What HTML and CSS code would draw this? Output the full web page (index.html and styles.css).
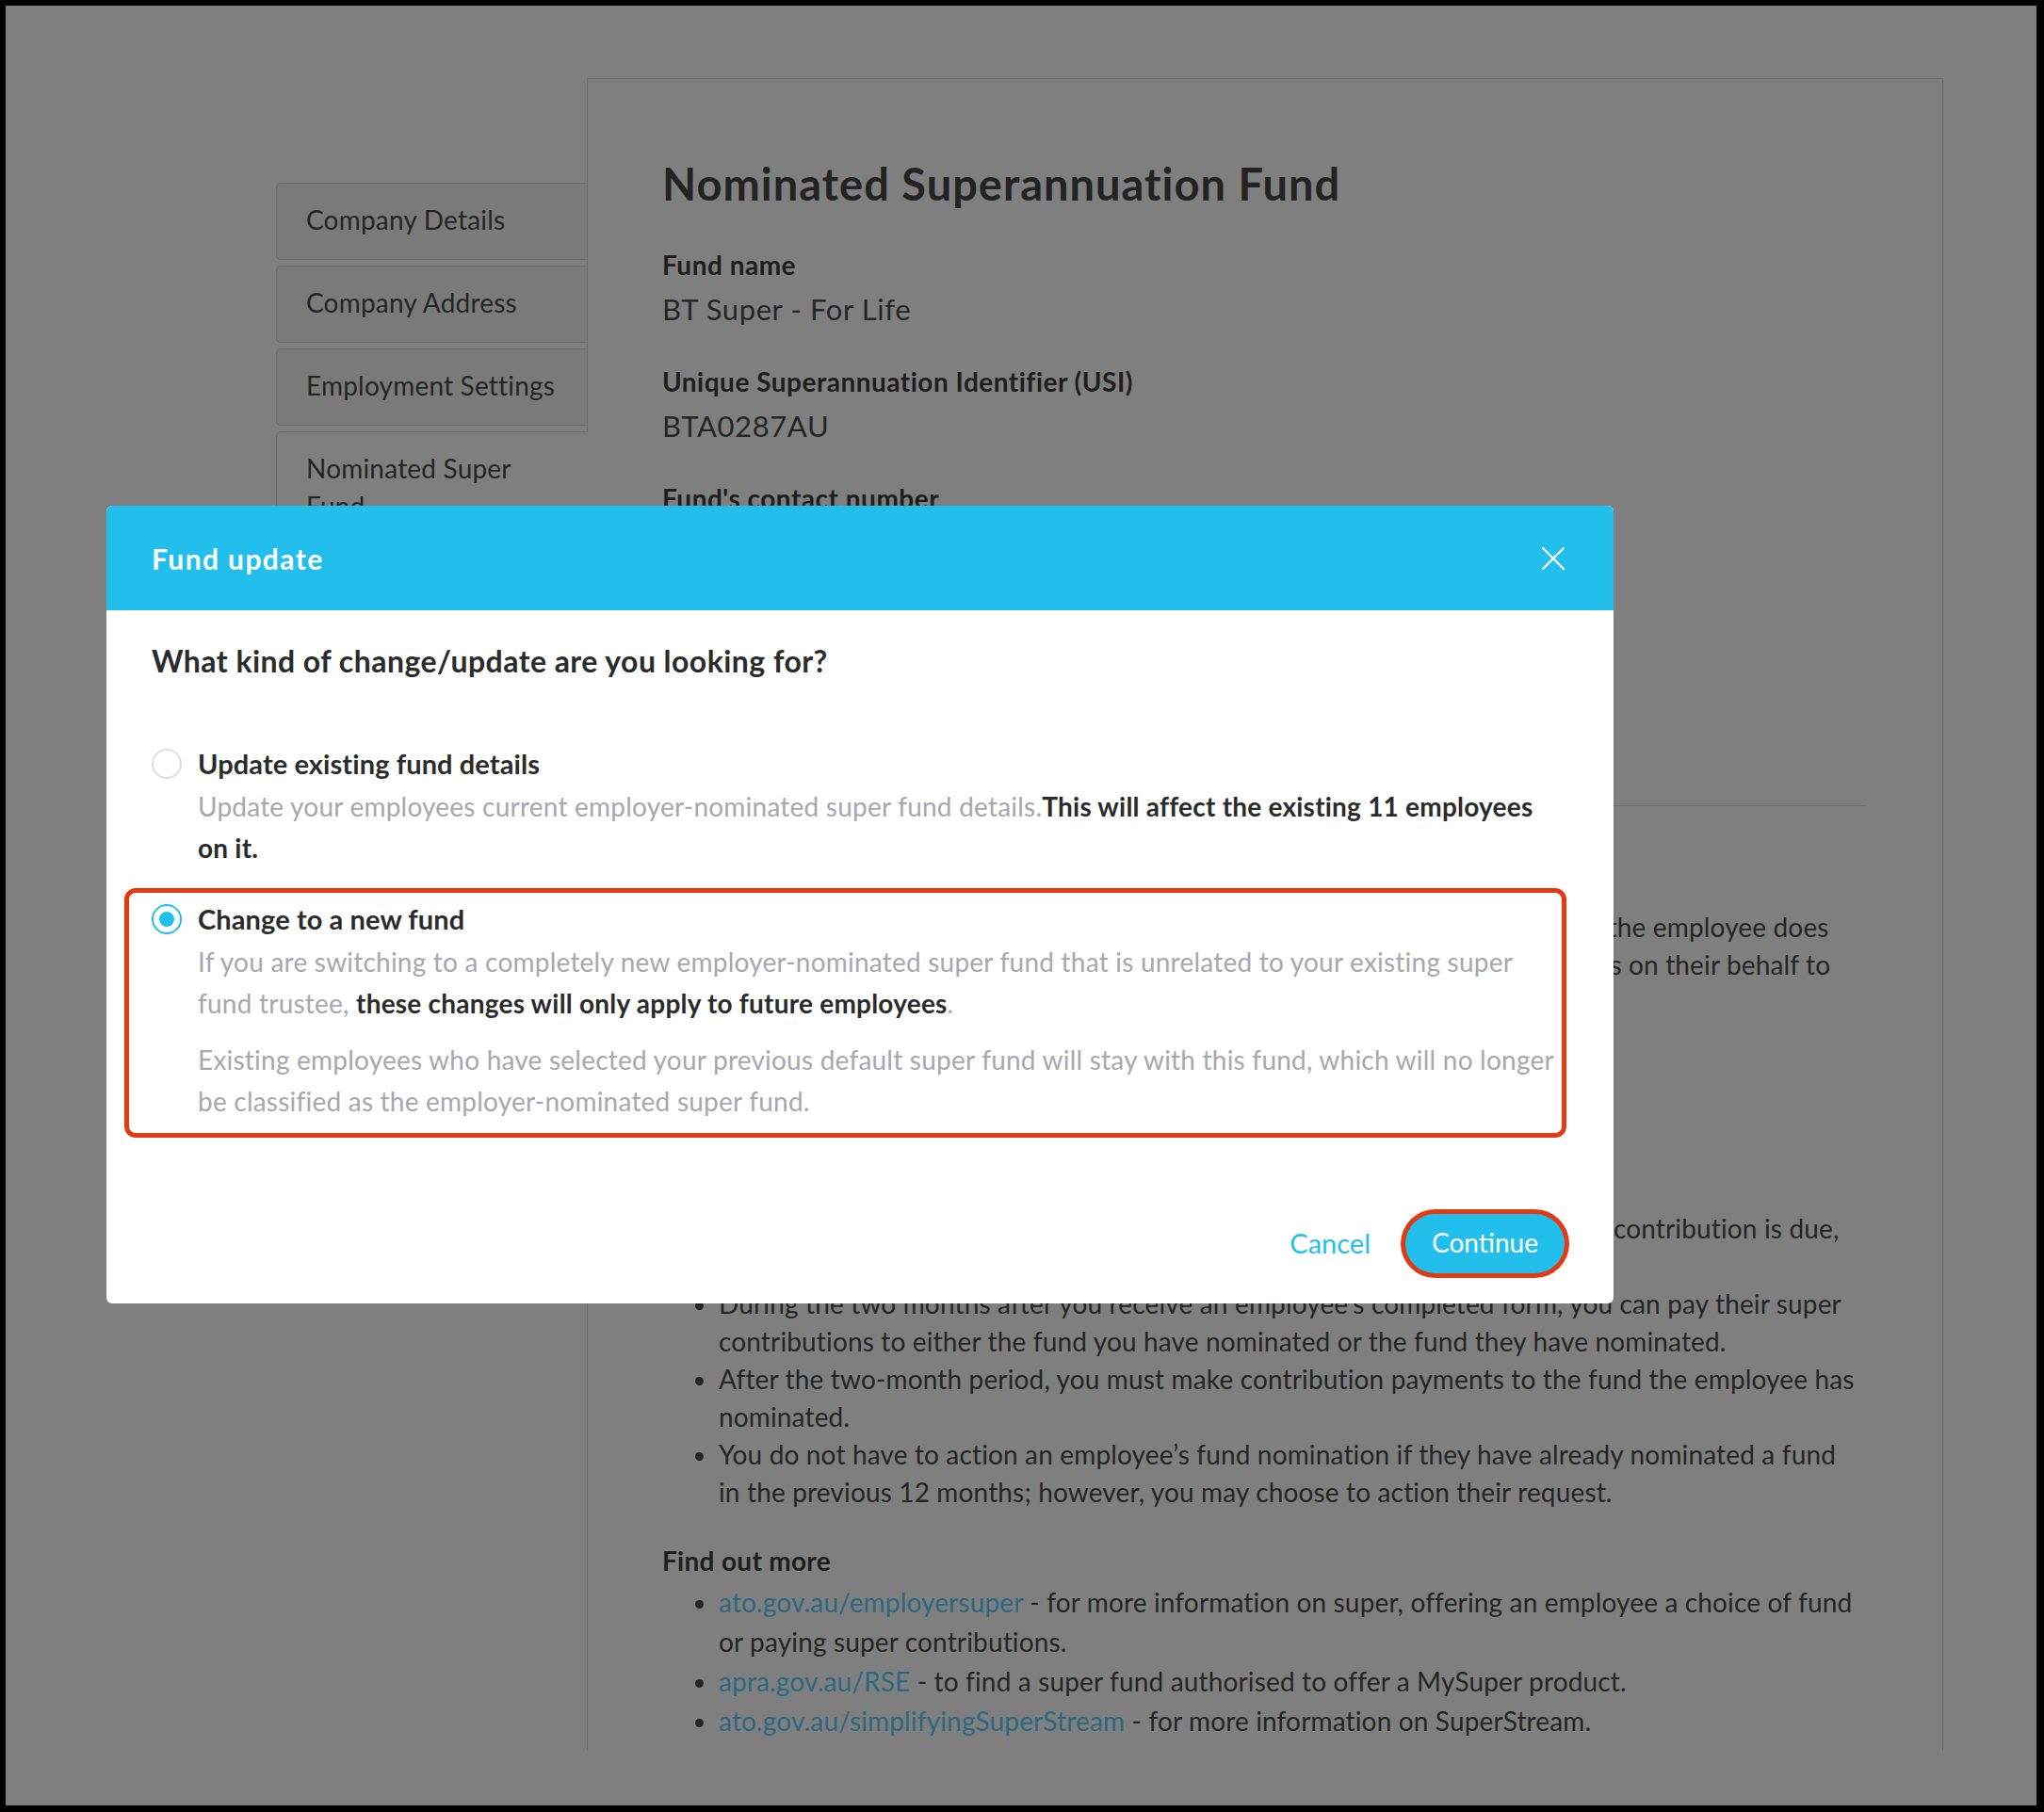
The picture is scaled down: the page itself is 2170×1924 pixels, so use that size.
FILE: index.html
```html
<!DOCTYPE html>
<html lang="en">
<head>
<meta charset="utf-8">
<title>Fund update</title>
<link rel="stylesheet" href="styles.css">
</head>
<body>
<div class="screen">
  <div class="page">
    <nav class="tabs">
      <a class="tab">Company Details</a>
      <a class="tab">Company Address</a>
      <a class="tab">Employment Settings</a>
      <a class="tab active">Nominated Super Fund</a>
    </nav>
    <main class="card">
      <h1 class="title">Nominated Superannuation Fund</h1>
      <dl class="fields">
        <dt>Fund name</dt>
        <dd>BT Super - For Life</dd>
        <dt>Unique Superannuation Identifier (USI)</dt>
        <dd>BTA0287AU</dd>
        <dt>Fund's contact number</dt>
        <dd>1300 653 553</dd>
        <dt>Fund's ABN</dt>
        <dd>39 827 542 991</dd>
      </dl>
      <hr class="rule">
      <h3 class="sub">Employee choice of super fund</h3>
      <p class="para">Offer eligible new employees a choice of super fund within 28 days of starting. If the employee does<br>not choose any fund, you must pay the compulsory Super Guarantee contributions on their behalf to<br>your nominated default fund.</p>
      <h3 class="sub sub-2">When an employee chooses a fund</h3>
      <p class="para para-short">An employee can choose a fund by completing a Standard choice form.</p>
      <p class="para para-3">You must act on a completed choice form within two months, or prior to the next contribution is due,<br>whichever is later.</p>
      <ul class="bullets">
        <li>During the two months after you receive an employee’s completed form, you can pay their super<br>contributions to either the fund you have nominated or the fund they have nominated.</li>
        <li>After the two-month period, you must make contribution payments to the fund the employee has<br>nominated.</li>
        <li>You do not have to action an employee’s fund nomination if they have already nominated a fund<br>in the previous 12 months; however, you may choose to action their request.</li>
      </ul>
      <h4 class="more">Find out more</h4>
      <ul class="bullets links">
        <li><a class="link">ato.gov.au/employersuper</a> - for more information on super, offering an employee a choice of fund<br>or paying super contributions.</li>
        <li><a class="link">apra.gov.au/RSE</a> - to find a super fund authorised to offer a MySuper product.</li>
        <li><a class="link">ato.gov.au/simplifyingSuperStream</a> - for more information on SuperStream.</li>
      </ul>
    </main>
  </div>

  <div class="overlay"></div>

  <section class="modal" role="dialog" aria-label="Fund update">
    <header class="modal-head">
      <h2 class="modal-title">Fund update</h2>
      <button class="close" aria-label="Close">
        <svg width="24" height="24" viewBox="0 0 24 24"><path d="M1 1 L23 23 M23 1 L1 23" stroke="#fff" stroke-width="2.2" fill="none" stroke-linecap="round"/></svg>
      </button>
    </header>
    <div class="modal-body">
      <p class="question">What kind of change/update are you looking for?</p>
      <div class="option">
        <span class="radio"></span>
        <div class="opt-text">
          <div class="opt-label">Update existing fund details</div>
          <p class="opt-desc">Update your employees current employer-nominated super fund details.<b>This will affect the existing 11 employees<br>on it.</b></p>
        </div>
      </div>
      <div class="option selected">
        <span class="radio checked"></span>
        <div class="opt-text">
          <div class="opt-label">Change to a new fund</div>
          <p class="opt-desc">If you are switching to a completely new employer-nominated super fund that is unrelated to your existing super<br>fund trustee, <b>these changes will only apply to future employees</b>.</p>
          <p class="opt-desc opt-desc-2">Existing employees who have selected your previous default super fund will stay with this fund, which will no longer<br>be classified as the employer-nominated super fund.</p>
        </div>
      </div>
    </div>
    <footer class="modal-foot">
      <button class="btn-cancel">Cancel</button>
      <button class="btn-continue">Continue</button>
    </footer>
  </section>
</div>
</body>
</html>
```

FILE: styles.css
```css
* { box-sizing: border-box; }

html, body {
  margin: 0;
  padding: 0;
}

body {
  background: #000;
  font-family: "Lato", "Liberation Sans", sans-serif;
  color: #4a4a4a;
}

.screen {
  position: relative;
  margin: 6px 0 0 6px;
  width: 2156px;
  height: 1911px;
  background: #fff;
  overflow: hidden;
}

.page {
  display: flex;
  align-items: flex-start;
  padding: 77px 0 0 287px;
  isolation: isolate;
}

/* sidebar tabs */
.tabs {
  display: flex;
  flex-direction: column;
  gap: 6px;
  width: 330px;
  margin-top: 111px;
  position: relative;
  z-index: 1;
}

.tab {
  display: block;
  height: 82px;
  padding: 18px 14px 22px 31px;
  font-size: 28px;
  letter-spacing: 0.2px;
  line-height: 40px;
  white-space: nowrap;
  color: #4a4a4a;
  background: #f5f5f5;
  border: 1px solid #d6d6d6;
  border-right: none;
  border-radius: 5px 0 0 5px;
}

.tab.active {
  background: #fff;
  margin-right: -1px;
  height: 220px;
  padding: 18px 40px 20px 31px;
  white-space: normal;
}

/* content card */
.card {
  width: 1440px;
  height: 1776px;
  border: 1px solid #d9d9d9;
  border-bottom: none;
  padding: 0 81px 0 79px;
}

.title {
  margin: 83px 0 0;
  font-size: 47px;
  letter-spacing: 1px;
  line-height: 56px;
  font-weight: 700;
  color: #474747;
}

.fields {
  margin: 40px 0 0;
}

.fields dt {
  font-size: 28px;
  letter-spacing: 0.5px;
  line-height: 36px;
  font-weight: 700;
  color: #3d3d3d;
}

.fields dd {
  margin: 9px 0 39px;
  font-size: 31px;
  letter-spacing: 0.6px;
  line-height: 40px;
  color: #4d4d4d;
}

.rule {
  margin: 135px 0 0;
  border: none;
  border-top: 1px solid #d9d9d9;
  height: 0;
}

.sub {
  margin: 36px 0 0;
  font-size: 29px;
  line-height: 36px;
  font-weight: 700;
  color: #3d3d3d;
}

.sub-2 { margin-top: 40px; }

.para {
  margin: 36px 0 0;
  font-size: 28px;
  letter-spacing: 0.15px;
  line-height: 40px;
  white-space: nowrap;
}

.para-short { margin-top: 24px; }
.para-3 { margin-top: 60px; }

.bullets {
  margin: 0;
  padding-left: 60px;
  font-size: 28px;
  letter-spacing: 0.15px;
  line-height: 40px;
  white-space: nowrap;
}

.more {
  margin: 35px 0 0;
  font-size: 28px;
  letter-spacing: 0.3px;
  line-height: 36px;
  font-weight: 700;
  color: #3d3d3d;
}

.links {
  margin-top: 5px;
  line-height: 42px;
}

.link {
  color: #5ad0ff;
}

/* overlay */
.overlay {
  position: absolute;
  inset: 0;
  z-index: 2;
  background: rgba(0, 0, 0, 0.5);
}

/* modal */
.modal {
  position: absolute;
  z-index: 3;
  left: 107px;
  top: 531px;
  width: 1600px;
  background: #fff;
  border-radius: 6px;
  overflow: hidden;
}

.modal-head {
  height: 111px;
  background: #23bfec;
  display: flex;
  align-items: center;
  justify-content: space-between;
  padding: 0 52px 0 48px;
}

.modal-title {
  margin: 0;
  font-size: 30px;
  letter-spacing: 1.4px;
  font-weight: 700;
  color: #fff;
}

.close {
  width: 24px;
  height: 24px;
  padding: 0;
  border: none;
  background: none;
  display: flex;
}

.modal-body {
  padding: 34px 48px 0;
}

.question {
  margin: 0 0 69px;
  font-size: 32px;
  letter-spacing: 0.45px;
  line-height: 40px;
  font-weight: 700;
  color: #2b2b2b;
}

.option {
  display: grid;
  grid-template-columns: 32px 1fr;
  column-gap: 17px;
  margin-bottom: 21px;
}

.option.selected {
  margin: 0 2px 0 -29px;
  padding: 8px 0 12px 24px;
  border: 5px solid #e23b12;
  border-radius: 12px;
}

.radio {
  width: 32px;
  height: 32px;
  margin-top: 4px;
  border: 2px solid #dcdce3;
  border-radius: 50%;
  display: flex;
  align-items: center;
  justify-content: center;
}

.radio.checked {
  border-color: #23bfec;
}

.radio.checked::after {
  content: "";
  width: 16px;
  height: 16px;
  border-radius: 50%;
  background: #23bfec;
}

.opt-label {
  font-size: 29px;
  letter-spacing: 0.1px;
  line-height: 40px;
  font-weight: 700;
  color: #2b2b2b;
}

.opt-desc {
  margin: 3px 0 0;
  font-size: 28px;
  letter-spacing: 0.22px;
  line-height: 44px;
  color: #a7a7af;
  white-space: nowrap;
}

.selected .opt-desc-2 { margin-top: 16px; }

.opt-desc b {
  color: #2b2b2b;
  font-weight: 700;
}

.modal-foot {
  display: flex;
  justify-content: flex-end;
  align-items: center;
  gap: 37px;
  margin-top: 81px;
  padding: 0 52px 32px 48px;
}

.btn-cancel {
  border: none;
  background: none;
  padding: 0 0 3px;
  font-family: inherit;
  font-size: 29px;
  color: #23bfec;
}

.btn-continue {
  width: 169px;
  height: 63px;
  padding: 0 0 3px;
  border: none;
  border-radius: 32px;
  background: #23bfec;
  color: #fff;
  font-family: inherit;
  font-size: 28px;
  box-shadow: 0 0 0 5px #e23b12;
}
```
